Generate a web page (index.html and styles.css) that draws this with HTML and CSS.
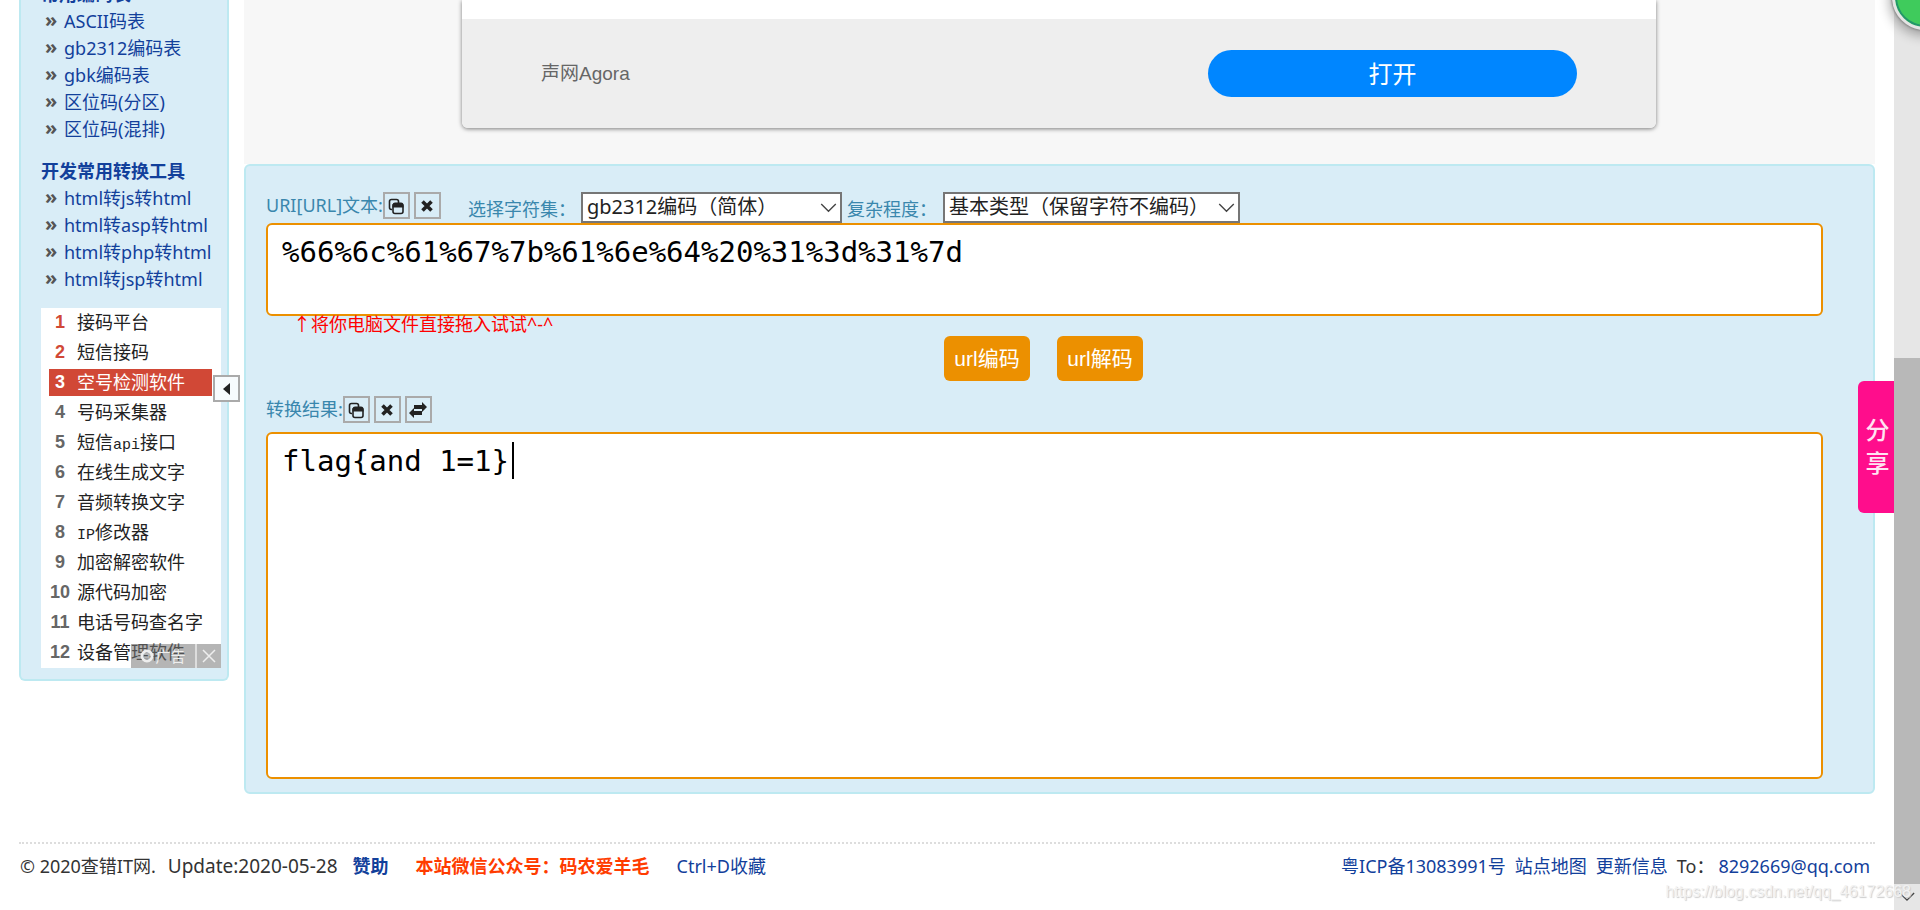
FILE: index.html
```html
<!DOCTYPE html>
<html lang="zh-CN">
<head>
<meta charset="utf-8">
<title>URL编码解码</title>
<link rel="stylesheet" href="styles.css">
</head>
<body>
<svg class="defs" aria-hidden="true">
  <symbol id="i-copy" viewBox="0 0 18 18">
    <rect x="2.5" y="2.5" width="9" height="10" rx="2" fill="none" stroke="#222" stroke-width="1.6"/>
    <rect x="5" y="6" width="12" height="11" rx="2.5" fill="#d9edf7"/>
    <rect x="6" y="7" width="10" height="9.5" rx="2" fill="none" stroke="#222" stroke-width="1.6"/>
    <path d="M5.5 7.5Q6 5.5 8 5.5H14Q16.500 5.500 16.500 8V10.500H5.500Z" fill="#222"/>
  </symbol>
  <symbol id="i-close" viewBox="0 0 18 18">
    <path d="M4.500 4.500L13.500 13.500M13.500 4.500L4.500 13.500" stroke="#222" stroke-width="3.600"/>
  </symbol>
  <symbol id="i-swap" viewBox="0 0 18 18">
    <path d="M18 6L13 1V4H5V8H13V11ZM0 12L5 7V10H13V14H5V17Z" fill="#222"/>
  </symbol>
  <symbol id="i-chevron" viewBox="0 0 18 11">
    <path d="M1 1L9 9L17 1" fill="none" stroke="#444" stroke-width="1.500"/>
  </symbol>
</svg>
<div class="page">
  <div class="columns">
    <nav class="sidebar">
      <h2>常用编码表</h2>
      <ul class="links">
        <li><a href="#">ASCII码表</a></li>
        <li><a href="#">gb2312编码表</a></li>
        <li><a href="#">gbk编码表</a></li>
        <li><a href="#">区位码(分区)</a></li>
        <li><a href="#">区位码(混排)</a></li>
      </ul>
      <h2>开发常用转换工具</h2>
      <ul class="links">
        <li><a href="#">html转js转html</a></li>
        <li><a href="#">html转asp转html</a></li>
        <li><a href="#">html转php转html</a></li>
        <li><a href="#">html转jsp转html</a></li>
      </ul>
      <div class="ranking">
        <ol>
          <li class="top"><b>1</b><span>接码平台</span></li>
          <li class="top"><b>2</b><span>短信接码</span></li>
          <li class="active"><b>3</b><span>空号检测软件</span></li>
          <li><b>4</b><span>号码采集器</span></li>
          <li><b>5</b><span>短信<span class="latin">api</span>接口</span></li>
          <li><b>6</b><span>在线生成文字</span></li>
          <li><b>7</b><span>音频转换文字</span></li>
          <li><b>8</b><span><span class="latin">IP</span>修改器</span></li>
          <li><b>9</b><span>加密解密软件</span></li>
          <li><b>10</b><span>源代码加密</span></li>
          <li><b>11</b><span>电话号码查名字</span></li>
          <li><b>12</b><span>设备管理软件</span></li>
        </ol>
        <div class="ad-mark">
          <span class="ad-name"><svg width="14" height="14" viewBox="0 0 14 14"><circle cx="7" cy="7" r="5" fill="none" stroke="#eee" stroke-width="3"/></svg>广告</span>
          <span class="ad-close"><svg width="14" height="14" viewBox="0 0 14 14"><path d="M1 1L13 13M13 1L1 13" stroke="#eee" stroke-width="1.500"/></svg></span>
        </div>
      </div>
      <button class="collapse" type="button" aria-label="收起"><svg width="8" height="12" viewBox="0 0 8 12"><path d="M7 0V12L0 6Z" fill="#222"/></svg></button>
    </nav>
    <main class="main">
      <section class="banner">
        <div class="card">
          <div class="card-foot">
            <span class="brand">声网Agora</span>
            <button class="open" type="button">打开</button>
          </div>
        </div>
      </section>
      <form class="panel">
        <div class="toolbar">
          <div class="tools">
            <label for="src">URI[URL]文本:</label>
            <button class="icon" type="button" aria-label="复制"><svg><use href="#i-copy"/></svg></button>
            <button class="icon" type="button" aria-label="清空"><svg><use href="#i-close"/></svg></button>
          </div>
          <label class="field-label charset-label" for="charset">选择字符集：</label>
          <span class="select charset"><select id="charset"><option>gb2312编码（简体）</option></select><svg><use href="#i-chevron"/></svg></span>
          <label class="field-label level-label" for="level">复杂程度：</label>
          <span class="select level"><select id="level"><option>基本类型（保留字符不编码）</option></select><svg><use href="#i-chevron"/></svg></span>
        </div>
        <textarea class="text source" id="src" spellcheck="false">%66%6c%61%67%7b%61%6e%64%20%31%3d%31%7d</textarea>
        <p class="hint">↑将你电脑文件直接拖入试试^-^</p>
        <div class="actions">
          <button type="button">url编码</button>
          <button type="button">url解码</button>
        </div>
        <div class="tools result-tools">
          <label for="out">转换结果:</label>
          <button class="icon" type="button" aria-label="复制结果"><svg><use href="#i-copy"/></svg></button>
          <button class="icon" type="button" aria-label="清空结果"><svg><use href="#i-close"/></svg></button>
          <button class="icon" type="button" aria-label="交换"><svg><use href="#i-swap"/></svg></button>
        </div>
        <div class="result">
          <textarea class="text output" id="out" spellcheck="false">flag{and 1=1}</textarea>
          <span class="caret"></span>
        </div>
      </form>
    </main>
  </div>
  <footer class="footer">
    <div class="foot-left">
      <span>© 2020查错IT网.</span>
      <span class="updated">Update:2020-05-28</span>
      <a class="sponsor" href="#">赞助</a>
      <strong class="notice">本站微信公众号：码农爱羊毛</strong>
      <a href="#">Ctrl+D收藏</a>
    </div>
    <div class="foot-right">
      <a href="#">粤ICP备13083991号</a>
      <a href="#">站点地图</a>
      <a href="#">更新信息</a>
      <span>To：</span>
      <a class="mail" href="#">8292669@qq.com</a>
    </div>
  </footer>
</div>
<div class="scrollbar">
  <div class="thumb"></div>
  <div class="arrow"><svg width="16" height="10"><use href="#i-chevron"/></svg></div>
</div>
<button class="share" type="button"><span>分</span><span>享</span></button>
<div class="ball"></div>
<div class="watermark">https://blog.csdn.net/qq_46172668</div>
</body>
</html>
```
FILE: styles.css
```css
*, *::before { box-sizing: border-box; }
body {
  position: relative;
  display: flex;
  min-height: 100vh;
  margin: 0;
  overflow: hidden;
  background: #fff;
  color: #333;
  font: 18px/27px "Noto Sans", "Noto Sans CJK SC", sans-serif;
}
button, select, textarea { margin: 0; font: inherit; }
a { color: #12409b; text-decoration: none; }
ul, ol, h2, p { margin: 0; padding: 0; list-style: none; }
.defs { position: absolute; width: 0; height: 0; }
.page { flex: 1; min-width: 0; padding: 0 19px; }
.columns { display: flex; align-items: flex-start; gap: 15px; }

/* sidebar */
.sidebar {
  position: relative;
  flex: 0 0 210px;
  margin-top: -19px;
  padding: 0 6px 11px 20px;
  border: solid #bde9f1;
  border-width: 0 2px 2px;
  border-radius: 0 0 6px 6px;
  background: #d9edf7;
  white-space: nowrap;
}
.sidebar h2 { color: #12409b; font-size: 18px; line-height: 27px; }
.links + h2 { margin-top: 15px; }
.links li { display: flex; }
.links li::before {
  content: "»";
  width: 23px;
  padding-left: 4px;
  color: #555;
  font-weight: bold;
  font-size: 20px;
  line-height: 24px;
}
.ranking { position: relative; margin-top: 15px; padding: 0 9px 0 8px; background: #fff; }
.ranking ol { display: flex; flex-direction: column; gap: 3px; padding: 1px 0 2px; }
.ranking li { display: flex; height: 27px; line-height: 27px; color: #222; }
.ranking b {
  width: 22px;
  margin-right: 6px;
  text-align: center;
  color: #666;
  font-family: "Liberation Sans", sans-serif;
}
.ranking .top b { color: #d14836; }
.ranking .active { background: #d14836; color: #fff; }
.ranking .active b { color: #fff; }
.latin { font-family: "Liberation Mono", monospace; font-size: 15px; line-height: 1; }
.ad-mark {
  position: absolute;
  right: 0;
  bottom: 0;
  display: flex;
  height: 24px;
  background: rgba(120, 120, 120, .55);
  color: #eee;
  font-size: 15px;
  line-height: 24px;
}
.ad-name { display: flex; align-items: center; justify-content: center; gap: 1px; width: 64px; }
.ad-close { display: flex; align-items: center; justify-content: center; width: 26px; border-left: 2px solid #ddd; }
.collapse {
  position: absolute;
  top: 394px;
  right: -13px;
  display: flex;
  align-items: center;
  justify-content: center;
  width: 27px;
  height: 27px;
  padding: 0;
  border: 2px solid #aaa;
  background: #f7fbfd;
}

/* promo banner */
.main { flex: 1; min-width: 0; }
.banner { padding: 0 219px 36px 218px; background: #f7f7f7; }
.card {
  padding-top: 19px;
  border-radius: 0 0 6px 6px;
  background: #fff;
  box-shadow: 0 1px 4px rgba(0, 0, 0, .5);
}
.card-foot {
  display: flex;
  align-items: center;
  justify-content: space-between;
  height: 109px;
  padding: 0 79px;
  border-radius: 0 0 6px 6px;
  background: #eee;
}
.brand { color: #666; font-family: "Liberation Sans", "Noto Sans CJK SC", sans-serif; font-size: 19px; }
.open {
  width: 369px;
  height: 47px;
  padding: 0;
  border: 0;
  border-radius: 24px;
  background: #0086ff;
  color: #fff;
  font-size: 24px;
}

/* converter */
.panel {
  padding: 26px 50px 13px 20px;
  border: 2px solid #bde9f1;
  border-radius: 6px;
  background: #d9edf7;
  color: #3a87ad;
}
.toolbar { display: flex; align-items: flex-start; white-space: nowrap; }
.tools { display: flex; align-items: center; gap: 4px; }
.tools label { margin-right: -4px; }
.icon {
  display: flex;
  align-items: center;
  justify-content: center;
  width: 27px;
  height: 27px;
  padding: 0;
  border: 2px solid #aaa;
  background: transparent;
}
.icon svg { width: 18px; height: 18px; }
.field-label { padding-top: 4px; }
.charset-label { width: 113px; margin-left: 27px; }
.level-label { width: 96px; margin-left: 5px; }
.select { position: relative; }
.select select {
  width: 100%;
  height: 31px;
  padding: 0 4px 2px;
  border: 2px solid #767676;
  border-radius: 0;
  appearance: none;
  background: #fff;
  color: #222;
  font-size: 20px;
  line-height: 24px;
}
.select svg { position: absolute; top: 11px; right: 5px; width: 17px; height: 10px; pointer-events: none; }
.charset { width: 261px; }
.level { width: 297px; }
.text {
  display: block;
  width: 100%;
  padding: 9px 14px;
  border: 2px solid #ec9000;
  border-radius: 6px;
  outline: 0;
  resize: none;
  overflow: hidden;
  background: #fff;
  color: #000;
  font: 29px/36px "DejaVu Sans Mono", monospace;
}
.source { height: 93px; }
.output { height: 347px; }
.hint { padding-left: 27px; color: #f00; line-height: 16px; }
.actions { display: flex; justify-content: center; gap: 27px; margin-top: 4px; padding-right: 2px; }
.actions button {
  width: 86px;
  height: 45px;
  padding: 0;
  border: 0;
  border-radius: 6px;
  background: #ec9000;
  color: #fff;
  font-size: 21px;
  font-family: "Liberation Sans", "Noto Sans CJK SC", sans-serif;
}
.result-tools { margin: 15px 0 9px; }
.result { position: relative; }
.caret { position: absolute; top: 10px; left: 246px; width: 2px; height: 37px; background: #000; }

/* footer */
.footer {
  display: flex;
  justify-content: space-between;
  margin-top: 48px;
  padding: 9px 5px 0 1px;
  border-top: 2px dotted #ddd;
  white-space: nowrap;
}
.foot-left { display: flex; }
.foot-right { display: flex; gap: 9px; }
.updated { margin-left: 12px; font-size: 19px; }
.sponsor { margin: 0 27px 0 15px; font-weight: bold; }
.notice { margin-right: 27px; color: #ff3c00; }
.mail { margin-left: -5px; }

/* window edge */
.scrollbar { display: flex; flex: 0 0 26px; flex-direction: column; background: #e6e6e6; }
.thumb { flex: 1; margin-top: 358px; background: #b8b8b8; }
.arrow { display: flex; align-items: center; justify-content: center; height: 26px; }
.share {
  position: absolute;
  top: 381px;
  right: 26px;
  display: flex;
  flex-direction: column;
  align-items: center;
  justify-content: center;
  width: 36px;
  height: 132px;
  padding: 0 0 2px 3px;
  border: 0;
  border-radius: 6px 0 0 6px;
  background: #ff0d8c;
  color: #ffe3f2;
  font-size: 24px;
  font-weight: 500;
  line-height: 33px;
}
.ball {
  position: absolute;
  top: -36px;
  right: -38px;
  width: 66px;
  height: 66px;
  border: 3px solid #e4e4e4;
  border-radius: 50%;
  background: #3fcb5c;
  box-shadow: inset 0 0 0 2px #23966a, 0 0 2px 1px #888, 0 3px 12px 3px rgba(0, 0, 0, .3);
}
.watermark {
  position: absolute;
  right: 9px;
  bottom: 5px;
  color: #f2f2f2;
  font-family: "Liberation Sans", sans-serif;
  font-size: 16px;
  text-shadow: 1px 1px 1px #ccc;
}
```
